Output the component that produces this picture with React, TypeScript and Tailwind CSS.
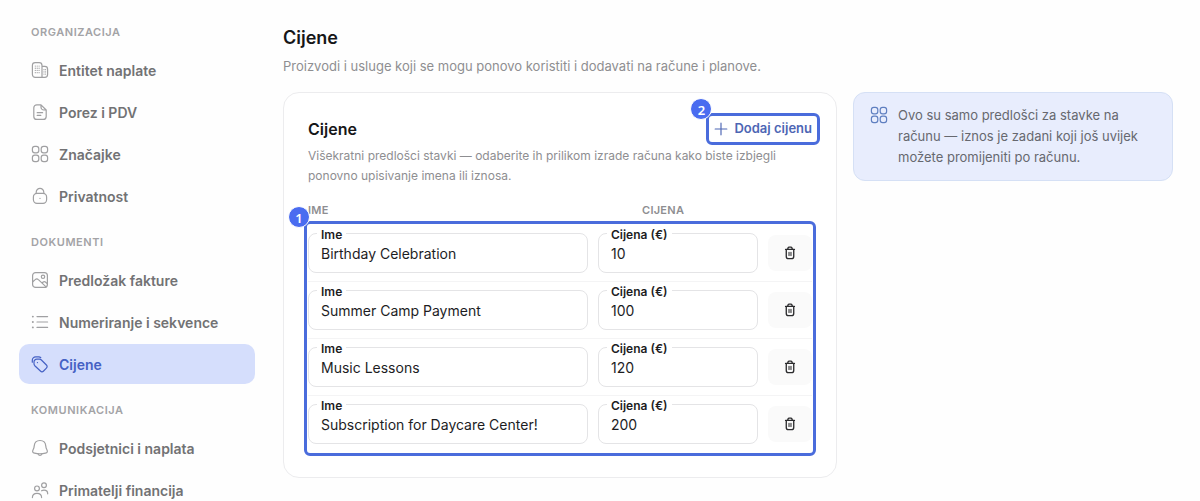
import { useState } from 'react'
import type { ReactNode } from 'react'

interface NavItem {
  label: string
  icon: ReactNode
  active?: boolean
}

interface NavSection {
  title: string
  items: NavItem[]
}

interface IconProps {
  className?: string
  children: ReactNode
}

function Icon({ className = 'size-[18px]', children }: IconProps) {
  return (
    <svg
      viewBox="0 0 18 18"
      fill="none"
      stroke="currentColor"
      strokeWidth="1.2"
      strokeLinecap="round"
      strokeLinejoin="round"
      aria-hidden="true"
      className={`shrink-0 ${className}`}
    >
      {children}
    </svg>
  )
}

function GridIcon({ className }: { className?: string }) {
  return (
    <Icon className={className}>
      <rect x="1.4" y="1.4" width="6.4" height="6.4" rx="2.4" />
      <rect x="10.2" y="1.4" width="6.4" height="6.4" rx="2.4" />
      <rect x="1.4" y="10.2" width="6.4" height="6.4" rx="2.4" />
      <rect x="10.2" y="10.2" width="6.4" height="6.4" rx="2.4" />
    </Icon>
  )
}

function TrashIcon() {
  return (
    <Icon className="size-4">
      <path d="M4 5h10M6.3 4.8l.6-1.7c.2-.5.5-.7 1-.7h2.2c.5 0 .8.2 1 .7l.6 1.7" strokeWidth="1.5" />
      <path d="M4.8 5.2v7.6a2.6 2.6 0 0 0 2.6 2.6h3.2a2.6 2.6 0 0 0 2.6-2.6V5.2" strokeWidth="1.5" />
      <path d="M7.9 8.2v3.6M10.1 8.2v3.6" />
    </Icon>
  )
}

const sections: NavSection[] = [
  {
    title: 'Organizacija',
    items: [
      {
        label: 'Entitet naplate',
        icon: (
          <Icon>
            <path d="M11 16.4H4.2a2.8 2.8 0 0 1-2.8-2.8V4.4a2.8 2.8 0 0 1 2.8-2.8h4a2.8 2.8 0 0 1 2.8 2.8zM11 5.4h2.8a2.8 2.8 0 0 1 2.8 2.8v5.4a2.8 2.8 0 0 1-2.8 2.8H11" />
            <path d="M4.3 5v8.6M6.2 5v8.6M8.1 5v8.6M13 8.6v5M14.6 8.6v5" strokeDasharray="0.1 2.1" />
          </Icon>
        ),
      },
      {
        label: 'Porez i PDV',
        icon: (
          <Icon>
            <path d="M10 1.8H5.8a3 3 0 0 0-3 3v8.6a3 3 0 0 0 3 3h6.4a3 3 0 0 0 3-3V7zM10 1.8v2.4A2.8 2.8 0 0 0 12.8 7h2.4" />
            <path d="M6.2 9.7h5.4M6.2 12.4h3.6" />
          </Icon>
        ),
      },
      { label: 'Značajke', icon: <GridIcon /> },
      {
        label: 'Privatnost',
        icon: (
          <Icon>
            <rect x="2.4" y="6.4" width="13.2" height="10" rx="3.6" />
            <path d="M5.2 6.4V5.2a3.8 3.8 0 0 1 7.6 0v1.2M9 11.3v.2" />
          </Icon>
        ),
      },
    ],
  },
  {
    title: 'Dokumenti',
    items: [
      {
        label: 'Predložak fakture',
        icon: (
          <Icon>
            <rect x="1.6" y="1.6" width="14.8" height="14.8" rx="3" />
            <circle cx="12" cy="5.8" r="1.7" />
            <path d="M1.8 10.8l2.4-2.2c1-1 2.2-1 3.2 0l7.4 7M11.2 12l1-1c.7-.6 1.5-.6 2.2 0l2 1.8" />
          </Icon>
        ),
      },
      {
        label: 'Numeriranje i sekvence',
        icon: (
          <Icon>
            <path d="M6 3.6h10.6M6 9h10.6M6 14.4h10.6" />
            <path d="M1.8 3.6h.1M1.8 9h.1M1.8 14.4h.1" strokeWidth="1.9" />
          </Icon>
        ),
      },
      {
        label: 'Cijene',
        active: true,
        icon: (
          <Icon>
            <path d="M3 8.7V7a2.8 2.8 0 0 1 2.8-2.8h2.6a2.8 2.8 0 0 1 2 .8l5 5c1 1 1 2.200 0 3.200l-2.800 2.800c-1 1-2.200 1-3.200 0l-5.600-5.300a2.800 2.800 0 0 1-.8-2z" />
            <path d="M1.3 7.200V5.200a3.300 3.300 0 0 1 3.300-3.300h3.200a2.800 2.800 0 0 1 2 .8M6.400 7.600h.1" />
          </Icon>
        ),
      },
    ],
  },
  {
    title: 'Komunikacija',
    items: [
      {
        label: 'Podsjetnici i naplata',
        icon: (
          <Icon>
            <path d="M9 1.5C5.4 1.5 3.4 4 3.2 7.1c-.1 1.8-.4 2.5-1.100 3.700-1 1.800-.4 3 1.400 3.400 3.600.8 7.400.8 11 0 1.800-.4 2.400-1.600 1.400-3.400-.7-1.200-1-1.900-1.100-3.700C14.600 4 12.600 1.500 9 1.500z" />
            <path d="M7 14.9c.4 1 1.100 1.600 2 1.600s1.600-.6 2-1.600" />
          </Icon>
        ),
      },
      {
        label: 'Primatelji financija',
        icon: (
          <Icon>
            <circle cx="6" cy="7.4" r="2.4" />
            <circle cx="13" cy="4.2" r="2.4" />
            <path d="M1.4 16.6c0-2.8 1.9-4.2 4.6-4.2s4.6 1.4 4.6 4.2M10.6 9.8c.7-.4 1.5-.6 2.4-.6 2.3 0 3.7 1.3 3.7 3.6" />
          </Icon>
        ),
      },
    ],
  },
]

const initialPrices = [
  { name: 'Birthday Celebration', amount: '10' },
  { name: 'Summer Camp Payment', amount: '100' },
  { name: 'Music Lessons', amount: '120' },
  { name: 'Subscription for Daycare Center!', amount: '200' },
]

interface FieldProps {
  id: string
  label: string
  value: string
  onChange: (value: string) => void
}

function Field({ id, label, value, onChange }: FieldProps) {
  return (
    <div className="relative">
      <input
        id={id}
        value={value}
        onChange={(e) => onChange(e.target.value)}
        className="block h-10 w-full rounded-lg border border-[#e4e4e6] bg-white px-3 text-[14px] text-[#1d1d1f] outline-none"
      />
      <label
        htmlFor={id}
        className="absolute -top-1.5 left-[9px] bg-white px-1 text-[12px] leading-4 font-semibold text-[#1d1d1f]"
      >
        {label}
      </label>
    </div>
  )
}

function StepBadge({ step }: { step: number }) {
  return (
    <span className="absolute -top-[18px] -left-[19px] flex size-[22px] items-center justify-center rounded-full border border-white bg-[#4a6cf0] pt-0.5 font-['Noto_Sans',sans-serif] text-[13px] leading-none font-semibold text-white">
      {step}
    </span>
  )
}

function Sidebar() {
  return (
    <nav className="flex w-59 shrink-0 flex-col gap-[18px]">
      {sections.map((section) => (
        <section key={section.title}>
          <h2 className="px-3 text-[11px] leading-4 font-semibold tracking-wider text-[#a3a3a6] uppercase">
            {section.title}
          </h2>
          <ul className="mt-2.5 flex flex-col gap-0.5">
            {section.items.map((item) => (
              <li key={item.label}>
                <a
                  href="#"
                  aria-current={item.active ? 'page' : undefined}
                  className={`flex h-10 items-center gap-2.5 rounded-[10px] px-3 text-[14px] font-semibold ${
                    item.active ? 'bg-[#d5defc] text-[#4561c4]' : 'text-[#727274]'
                  }`}
                >
                  <span className={item.active ? 'text-[#4561c4]' : 'text-[#a0a0a2]'}>{item.icon}</span>
                  {item.label}
                </a>
              </li>
            ))}
          </ul>
        </section>
      ))}
    </nav>
  )
}

function PriceTable() {
  const [prices, setPrices] = useState(initialPrices)

  const update = (index: number, key: 'name' | 'amount', value: string) =>
    setPrices(prices.map((price, i) => (i === index ? { ...price, [key]: value } : price)))

  return (
    <div className="relative mt-4">
      <table className="w-full table-fixed border-collapse">
        <thead>
          <tr className="text-left text-[11px] leading-4 tracking-wide text-[#8e8e91] uppercase">
            <th className="pb-[7px] font-semibold">Ime</th>
            <th className="w-[170px] pb-[7px] pl-11 font-semibold">Cijena</th>
            <th className="w-[44px] pb-[7px]" aria-label="Radnje" />
          </tr>
        </thead>
        <tbody>
          {prices.map((price, i) => (
            <tr key={i} className="border-b border-[#f4f4f5] last:border-transparent">
              <td className="py-2 pr-2.5">
                <Field
                  id={`name-${i}`}
                  label="Ime"
                  value={price.name}
                  onChange={(value) => update(i, 'name', value)}
                />
              </td>
              <td className="py-2 pr-2.5">
                <Field
                  id={`amount-${i}`}
                  label="Cijena (€)"
                  value={price.amount}
                  onChange={(value) => update(i, 'amount', value)}
                />
              </td>
              <td className="py-2">
                <button
                  type="button"
                  aria-label="Izbriši"
                  onClick={() => setPrices(prices.filter((_, j) => j !== i))}
                  className="flex h-9 w-full items-center justify-center rounded-lg bg-[#fafafa] text-[#2b2b2d]"
                >
                  <TrashIcon />
                </button>
              </td>
            </tr>
          ))}
        </tbody>
      </table>
      <div className="pointer-events-none absolute -inset-x-1 top-[19px] -bottom-[3px] rounded-md border-3 border-[#4a6cdc]">
        <StepBadge step={1} />
      </div>
    </div>
  )
}

export default function App() {
  return (
    <div className="flex h-screen gap-7 overflow-hidden bg-[#fefefe] pr-[27px] pl-[19px] font-[Inter,sans-serif]">
      <div className="pt-6">
        <Sidebar />
      </div>
      <main className="min-w-0 flex-1 pt-6">
        <h1 className="text-[18px] leading-7 font-semibold text-[#161618]">Cijene</h1>
        <p className="mt-1 text-[13px] leading-5 text-[#8e8e91]">
          Proizvodi i usluge koji se mogu ponovo koristiti i dodavati na račune i planove.
        </p>
        <div className="mt-4 flex items-start gap-4">
          <section className="min-w-0 flex-1 rounded-2xl border border-[#ececee] bg-white p-6">
            <div className="flex items-center justify-between">
              <h2 className="text-[16px] leading-6 font-semibold text-[#161618]">Cijene</h2>
              <div className="relative">
                <button
                  type="button"
                  className="flex h-6 items-center gap-1.5 text-[13px] font-semibold text-[#4d66b4]"
                >
                  <Icon className="size-3.5">
                    <path d="M9 1.5v15M1.5 9h15" strokeWidth="1.5" />
                  </Icon>
                  Dodaj cijenu
                </button>
                <div className="pointer-events-none absolute -inset-x-2 -inset-y-1 rounded-md border-3 border-[#4a6cdc]">
                  <StepBadge step={2} />
                </div>
              </div>
            </div>
            <p className="mt-[5px] text-[12px] leading-5 text-[#8e8e91]">
              Višekratni predlošci stavki — odaberite ih prilikom izrade računa kako biste izbjegli ponovno
              upisivanje imena ili iznosa.
            </p>
            <PriceTable />
          </section>
          <aside className="flex w-80 shrink-0 gap-2.5 rounded-xl border border-[#d5e0f5] bg-[#e8edfd] px-4 py-3">
            <GridIcon className="mt-px size-[18px] text-[#5f7fc0]" />
            <p className="text-[13px] leading-[21px] text-[#66686f]">
              Ovo su samo predlošci za stavke na računu — iznos je zadani koji još uvijek možete promijeniti po
              računu.
            </p>
          </aside>
        </div>
      </main>
    </div>
  )
}
